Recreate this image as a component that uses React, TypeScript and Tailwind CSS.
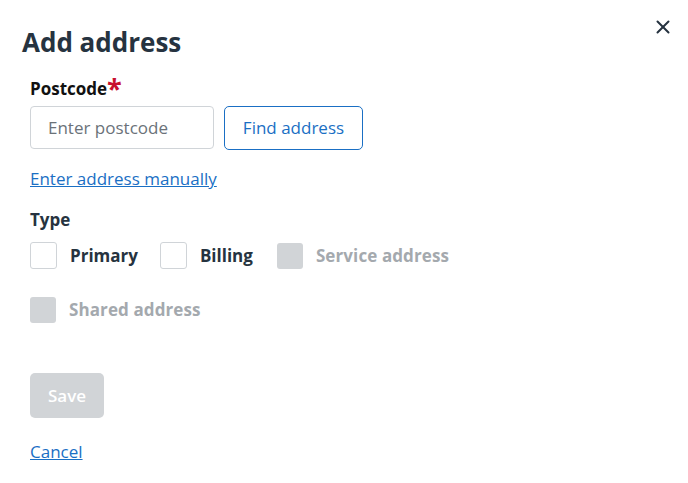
import { X } from "lucide-react"

function Checkbox({ label, disabled, className }: { label: string; disabled?: boolean; className?: string }) {
  return (
    <label className={"flex items-center gap-[13px] " + (className ?? "")}>
      <span
        className={
          disabled
            ? "h-[26px] w-[26px] rounded-[3px] bg-[#d1d4d7]"
            : "h-[27px] w-[27px] rounded-[3px] border border-[#d0d4d8] bg-white"
        }
      />
      <span
        className={
          disabled
            ? "text-[17px] font-bold tracking-[0.1px] text-[#a4a9ae]"
            : "text-[17px] font-bold text-[#263340]"
        }
      >
        {label}
      </span>
    </label>
  )
}

export default function App() {
  return (
    <div className="relative h-[483px] w-[688px] bg-white font-['Open_Sans',sans-serif] text-[#263340]">
      <button className="absolute right-[14px] top-[16px] text-[#263340]">
        <X size={22} strokeWidth={2.2} />
      </button>

      <div className="flex flex-col pl-[30px] pt-[24px]">
        <h1 className="-ml-[8px] text-[26px] font-bold leading-[36px] text-[#263340]">
          Add address
        </h1>

        <div className="mt-[18px] flex items-start text-[17px] font-bold leading-[22px] text-[#111]">
          Postcode<span className="text-[27px] leading-[20px] text-[#c8102e]">*</span>
        </div>

        <div className="mt-[6px] flex gap-[10px]">
          <input
            placeholder="Enter postcode"
            className="h-[43px] w-[184px] rounded-[4px] border border-[#d0d4d8] px-[17px] text-[17px] text-[#263340] placeholder:text-[#6b7279] outline-none"
          />
          <button className="h-[44px] w-[139px] rounded-[5px] border border-[#1a6fc4] text-[17px] text-[#1a6fc4]">
            Find address
          </button>
        </div>

        <a href="#" className="mt-[17px] self-start text-[17px] leading-[24px] text-[#1a6fc4] underline">
          Enter address manually
        </a>

        <div className="mt-[18px] text-[17px] font-bold leading-[22px] text-[#263340]">Type</div>

        <div className="mt-[11px] flex items-center gap-[22px]">
          <Checkbox label="Primary" />
          <Checkbox label="Billing" />
          <Checkbox label="Service address" disabled className="ml-[2px]" />
        </div>

        <div className="mt-[28px] flex">
          <Checkbox label="Shared address" disabled />
        </div>

        <button
          disabled
          className="mt-[50px] h-[45px] w-[74px] rounded-[5px] bg-[#d1d4d7] text-[17px] font-semibold text-white"
        >
          Save
        </button>

        <a href="#" className="mt-[22px] self-start text-[17px] leading-[24px] text-[#1a6fc4] underline">
          Cancel
        </a>
      </div>
    </div>
  )
}
